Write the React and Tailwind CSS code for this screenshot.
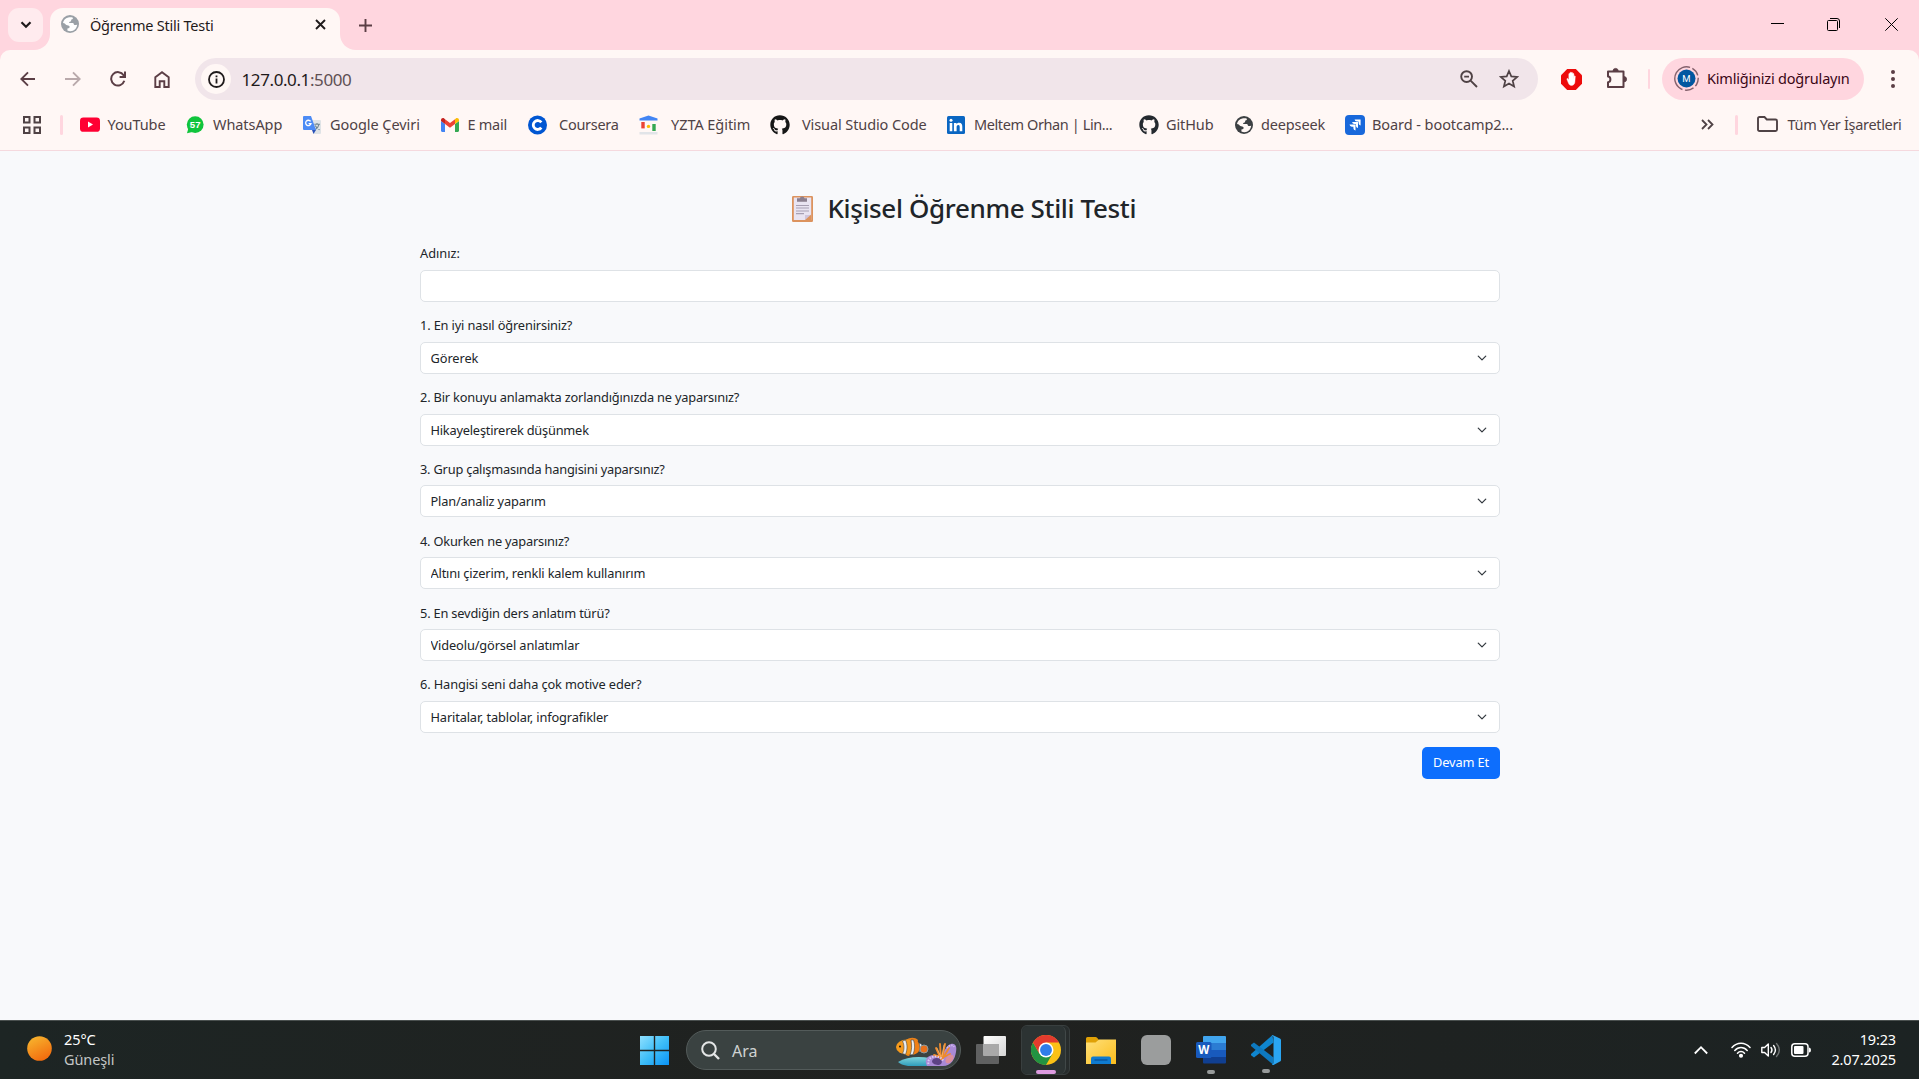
import React from 'react';
import { FaGithub } from 'react-icons/fa';

function Globe({ className, land }) {
  return (
    <svg className={className} viewBox="0 0 18 18">
      <circle cx="9" cy="9" r="9" fill="currentColor" />
      <path d="M7.2 2.4 C8.6 2.2 10.6 2 11.6 2.5 C12.4 3.6 11.5 4.4 10.4 4.6 C9.8 5.2 10.6 6 9.6 6.4 C8.4 6.6 8 7.2 8.2 8 L12 8 C12.8 8.2 12.6 9.6 13.4 10 C14.6 10.2 15.6 9.9 16.2 9.4 C16 13 13.2 16 9.4 16.2 C8.2 16.2 7.2 15.9 6.4 15.6 L6.4 13.6 C8 13.2 8.8 12.6 8.6 11.4 C8 10.2 6.4 10.4 5.4 10 C4.4 9.4 4 8.2 2 8 C2.2 5.4 4.4 3 7.2 2.4 Z" fill={land} />
    </svg>
  );
}

function YouTubeIcon() {
  return (
    <svg className="h-[15px] w-5" viewBox="0 0 20 15">
      <rect width="20" height="14.4" y=".4" rx="3.4" fill="#ff0033" />
      <path d="M8 4.6v6l5-3z" fill="#fff" />
    </svg>
  );
}

function WhatsAppIcon() {
  return (
    <svg className="h-[18px] w-[18px]" viewBox="0 0 18 18">
      <circle cx="9.2" cy="8.6" r="8.4" fill="#10c43c" />
      <path d="M1 17.2 2.4 12l4 4z" fill="#10c43c" />
      <text x="9.2" y="12.2" textAnchor="middle" fontSize="9.6" fontWeight="700" fill="#fff" fontFamily="Liberation Sans, sans-serif">57</text>
    </svg>
  );
}

function TranslateIcon() {
  return (
    <svg className="h-[18px] w-[18px]" viewBox="0 0 18 18">
      <path d="M7 4h10a1 1 0 0 1 1 1v12a1 1 0 0 1-1 1h-6z" fill="#dfe3e6" />
      <path d="M11.3 8.2h5.6M14 7v1.4M16 8.4c-.6 2.6-2 4.4-4 5.4M12.2 9.6c1 2 2.4 3.4 4.4 4.2" fill="none" stroke="#6f8792" strokeWidth="1.1" />
      <path d="M1 0h7l5 14H1a1 1 0 0 1-1-1V1a1 1 0 0 1 1-1z" fill="#4c8bf5" />
      <path d="m9 14 4 0-2.5 4z" fill="#2a52b8" />
      <path d="M7.6 5.4A2.7 2.7 0 1 0 8 7.6H5.6" fill="none" stroke="#fff" strokeWidth="1.3" />
    </svg>
  );
}

function GmailIcon() {
  return (
    <svg className="h-[14px] w-[18px]" viewBox="0 0 18 14">
      <path d="M0 3v9.8C0 13.5.6 14 1.2 14H4V6z" fill="#4285f4" />
      <path d="M18 3v9.8c0 .7-.6 1.2-1.2 1.2H14V6z" fill="#34a853" />
      <path d="M14 1.3V6l4-3V2c0-1.8-2-2.5-3.2-1.5z" fill="#fbbc04" />
      <path d="M4 6V1.3l5 3.8 5-3.8V6L9 9.8z" fill="#ea4335" />
      <path d="M0 2v1l4 3V1.3L3.2.5C2-.5 0 .2 0 2z" fill="#c5221f" />
    </svg>
  );
}

function CourseraIcon() {
  return (
    <svg className="h-5 w-[19px]" viewBox="0 0 20 20">
      <circle cx="10" cy="10" r="10" fill="#0056d2" />
      <path d="M14 7.2A4.7 4.7 0 1 0 14 12.8" fill="none" stroke="#fff" strokeWidth="3" />
    </svg>
  );
}

function AcademyIcon() {
  return (
    <svg className="h-5 w-[19px]" viewBox="0 0 19 20">
      <path d="M9.5.5 18.5 3.6V5.4H.5V3.6z" fill="#4285f4" />
      <rect x="2.3" y="7" width="3.4" height="6.4" fill="#ea4335" />
      <circle cx="9.5" cy="11.4" r="1.7" fill="#fbbc04" />
      <rect x="13.3" y="9" width="3.4" height="7" fill="#34a853" />
      <rect x=".5" y="17" width="18" height="2.5" fill="#e1e4e8" />
    </svg>
  );
}

function LinkedInIcon() {
  return (
    <svg className="h-[18px] w-[18px]" viewBox="0 0 18 18">
      <rect width="18" height="18" rx="1.5" fill="#0a66c2" />
      <path d="M2.7 6.9h2.6v8.4H2.7zM6.9 6.9h2.5v1.2c.5-.8 1.4-1.4 2.7-1.4 2.6 0 3.2 1.7 3.2 4v4.6h-2.6v-4.2c0-1 0-2.2-1.4-2.2s-1.7 1.1-1.7 2.2v4.2H6.900z" fill="#fff" />
      <circle cx="4" cy="4.2" r="1.5" fill="#fff" />
    </svg>
  );
}

function JiraIcon() {
  return (
    <svg className="h-5 w-5" viewBox="0 0 20 20">
      <rect width="20" height="20" rx="4" fill="#1868db" />
      <path d="M9.6 4.4H15.6V10.4A2.4 2.4 0 0 1 13.6 8.2V6.5H11.9A2.4 2.4 0 0 1 9.6 4.4zM7.1 7H13V13A2.4 2.4 0 0 1 10.9 10.7V9.1H9.4A2.4 2.4 0 0 1 7.1 7zM4.5 9.6H10.5V15.6A2.4 2.4 0 0 1 8.4 13.3V11.7H6.8A2.4 2.4 0 0 1 4.5 9.600z" fill="#fff" />
    </svg>
  );
}

const bookmarks = [
  { text: 'YouTube', icon: <YouTubeIcon />, box: 'w-[106px]', slot: 'w-[27.500px]', track: 'tracking-[-0.09px]' },
  { text: 'WhatsApp', icon: <WhatsAppIcon />, box: 'w-[117px]', slot: 'w-[27px]', track: 'tracking-[-0.07px]' },
  { text: 'Google Çeviri', icon: <TranslateIcon />, box: 'w-[138px]', slot: 'w-[27px]', track: 'tracking-[-0.06px]' },
  { text: 'E mail', icon: <GmailIcon />, box: 'w-[87px]', slot: 'w-[26.500px]', track: 'tracking-[-0.26px]' },
  { text: 'Coursera', icon: <CourseraIcon />, box: 'w-[111px]', slot: 'w-[31px]', track: 'tracking-[-0.28px]' },
  { text: 'YZTA Eğitim', icon: <AcademyIcon />, box: 'w-[131px]', slot: 'w-[32px]', track: 'tracking-[-0.05px]' },
  { text: 'Visual Studio Code', icon: <FaGithub className="h-5 w-5 text-[#161616]" />, box: 'w-[177px]', slot: 'w-[32px]', track: 'tracking-[-0.1px]' },
  { text: 'Meltem Orhan | Lin...', icon: <LinkedInIcon />, box: 'w-[192px]', slot: 'w-[27px]', track: 'tracking-[-0.4px]' },
  { text: 'GitHub', icon: <FaGithub className="h-5 w-5 text-[#24292f]" />, box: 'w-[96px]', slot: 'w-[27px]', track: 'tracking-[-0.12px]' },
  { text: 'deepseek', icon: <Globe className="h-[18px] w-[18px] text-[#3c4043]" land="#fff7f5" />, box: 'w-[110px]', slot: 'w-[26px]', track: 'tracking-[-0.15px]' },
  { text: 'Board - bootcamp2...', icon: <JiraIcon />, box: 'w-[356px]', slot: 'w-[27px]', track: 'tracking-[-0.07px]' },
];

const questions = [
  { label: '1. En iyi nasıl öğrenirsiniz?', labelTrack: 'tracking-[-0.15px]', value: 'Görerek', track: 'tracking-[-0.09px]' },
  { label: '2. Bir konuyu anlamakta zorlandığınızda ne yaparsınız?', labelTrack: 'tracking-[-0.185px]', value: 'Hikayeleştirerek düşünmek', track: 'tracking-[-0.21px]' },
  { label: '3. Grup çalışmasında hangisini yaparsınız?', labelTrack: 'tracking-[-0.2px]', value: 'Plan/analiz yaparım', track: 'tracking-[-0.165px]' },
  { label: '4. Okurken ne yaparsınız?', labelTrack: 'tracking-[-0.2px]', value: 'Altını çizerim, renkli kalem kullanırım', track: 'tracking-[-0.16px]' },
  { label: '5. En sevdiğin ders anlatım türü?', labelTrack: 'tracking-[-0.18px]', value: 'Videolu/görsel anlatımlar', track: 'tracking-[-0.12px]' },
  { label: '6. Hangisi seni daha çok motive eder?', labelTrack: 'tracking-[-0.12px]', value: 'Haritalar, tablolar, infografikler', track: 'tracking-[-0.14px]' },
];

function TabStrip() {
  return (
    <div className="flex h-[50px] bg-[#ffd6df]">
      <div className="ml-2 mt-2 flex h-[34px] w-[35px] items-center justify-center rounded-[11px] bg-[#ffebee]">
        <svg className="h-3 w-3" viewBox="0 0 12 12" fill="none" stroke="#1f1a1b" strokeWidth="2.2">
          <path d="M1.5 3.200 6 7.700l4.500-4.500" />
        </svg>
      </div>
      <div className="relative ml-[7px] mt-2 flex h-[42px] w-[290px] items-center rounded-t-[13px] bg-[#fff7f5] pb-1.5">
        <svg className="absolute bottom-0 right-full h-4 w-4" viewBox="0 0 16 16"><path d="M16 0v16H0C9 16 16 9 16 0z" fill="#fff7f5" /></svg>
        <svg className="absolute bottom-0 left-full h-4 w-4" viewBox="0 0 16 16"><path d="M0 0v16h16C7 16 0 9 0 0z" fill="#fff7f5" /></svg>
        <Globe className="mb-1 ml-[11px] h-[18px] w-[18px] text-[#9aa0a6]" land="#fff" />
        <span className="ml-[11px] text-[14.5px] tracking-[-0.23px] text-[#1f1a1b]">Öğrenme Stili Testi</span>
        <svg className="mb-1 ml-auto mr-[14.500px] h-[11px] w-[11px]" viewBox="0 0 11 11" stroke="#1f1a1b" strokeWidth="1.9">
          <path d="M1 1l9 9M10 1l-9 9" />
        </svg>
      </div>
      <svg className="ml-[19px] mt-[18.500px] h-[13px] w-[13px]" viewBox="0 0 13 13" stroke="#5b3e45" strokeWidth="1.9">
        <path d="M6.5 0v13M0 6.500h13" />
      </svg>
      <div className="ml-auto mr-[21px] mt-[18px] flex h-[13px] gap-[43px]">
        <svg className="h-[13px] w-[13px]" viewBox="0 0 13 13" stroke="#000"><path d="M0 5.500h13" /></svg>
        <svg className="h-[13px] w-[13px]" viewBox="0 0 13 13" fill="none" stroke="#000">
          <rect x=".5" y="2.5" width="10" height="10" rx="1" />
          <path d="M3 .5h7a2.500 2.500 0 0 1 2.500 2.500v7" />
        </svg>
        <svg className="ml-0.5 h-[13px] w-[13px]" viewBox="0 0 13 13" stroke="#000" strokeWidth="1"><path d="M.3.3l12.400 12.400M12.700.3.3 12.700" /></svg>
      </div>
    </div>
  );
}

function Toolbar() {
  return (
    <div className="flex h-[58px] items-center pr-[24px]">
      <svg className="ml-[20px] h-4 w-4" viewBox="0 0 16 16" fill="none" stroke="#5b3e45" strokeWidth="1.9"><path d="M15 8H2M8 1.300 1.300 8 8 14.700" /></svg>
      <svg className="ml-[29px] h-4 w-4" viewBox="0 0 16 16" fill="none" stroke="#b9a9ab" strokeWidth="1.9"><path d="M0 8h14M8 1.300 14.700 8 8 14.700" /></svg>
      <svg className="ml-[28.500px] h-4 w-4" viewBox="0 0 16 16" fill="none" stroke="#5b3e45" strokeWidth="2"><path d="M14.300 9.800A6.700 6.700 0 1 1 13.600 4.300L15 5.800M15 .4v5.500H9.600" /></svg>
      <svg className="ml-[28.500px] h-[17px] w-4" viewBox="0 0 16 17" fill="none" stroke="#5b3e45" strokeWidth="1.9"><path d="M1.300 16V6.300L8 1.200l6.700 5.100V16H10.300V10.200H5.700V16z" /></svg>
      <div className="ml-[25px] flex h-[42px] w-[1343px] items-center rounded-full bg-[#f1e5ea]">
        <div className="ml-[6px] flex h-[30px] w-[30px] items-center justify-center rounded-full bg-[#fff7f5]">
          <svg className="h-[17px] w-[17px]" viewBox="0 0 17 17" fill="none" stroke="#1f1a1b" strokeWidth="1.8">
            <circle cx="8.5" cy="8.5" r="7.5" />
            <path d="M8.5 7.600v4.800M8.500 4.500v1.700" />
          </svg>
        </div>
        <span className="ml-[10.500px] pt-px text-[17px] tracking-[-0.4px] text-[#1f1a1b]">127.0.0.1<span className="text-[#5f5054]">:5000</span></span>
        <svg className="ml-auto h-[18px] w-[18px]" viewBox="0 0 18 18" fill="none" stroke="#4f4245" strokeWidth="1.9">
          <circle cx="6.6" cy="6.6" r="5.4" />
          <path d="M10.600 10.600l6.400 6.400M4.200 6.600h4.800" />
        </svg>
        <svg className="ml-[21px] mr-[19.500px] h-[20px] w-[20px]" viewBox="0 0 20 20" fill="none" stroke="#4f4245" strokeWidth="1.7">
          <path d="M10 2l2.300 5.400 5.900.5-4.500 3.900 1.400 5.700L10 14.400l-5.100 3.100 1.400-5.700L1.800 7.900l5.900-.5z" />
        </svg>
      </div>
      <svg className="ml-[23px] h-[21px] w-[21px]" viewBox="0 0 21 21">
        <path d="M6.200 0h8.600L21 6.200v8.600L14.800 21H6.200L0 14.800V6.200z" fill="#ed0b0b" />
        <path d="M6 10.500c-.5-1 .5-1.500 1.200-.6l.6 1V5c0-.9 1.200-.9 1.200 0v3.800V3.900c0-.9 1.300-.9 1.300 0v4.900V3.900c0-.9 1.300-.9 1.300 0V9V5c0-.9 1.300-.9 1.300 0v5l.2-2.600c.1-.9 1.300-.8 1.200.1l-.4 5.500c-.2 2-1.500 3.500-3.400 3.500-1.700 0-2.500-.9-3.100-2.400z" fill="#fff" stroke="#fff" strokeWidth=".4" />
      </svg>
      <svg className="mb-0.5 ml-[24px] h-[22px] w-[22px]" viewBox="0 0 22 22">
        <path d="M2 4.500h15.500v15.500H2v-4.800c3.200 0 3.200-5.700 0-5.700z" fill="none" stroke="#5b3e45" strokeWidth="2" strokeLinejoin="round" />
        <path d="M7 4a2.600 2.600 0 0 1 5.200 0zM18 9.600a2.600 2.600 0 0 1 0 5.200z" fill="#5b3e45" stroke="#5b3e45" strokeWidth=".8" />
      </svg>
      <div className="ml-5 h-5 w-0.5 rounded bg-[#ffd6df]" />
      <div className="ml-3 flex h-[42px] w-[202px] items-center rounded-full bg-[#ffd6df]">
        <svg className="mb-px ml-[12px] h-[25px] w-[25px]" viewBox="0 0 25 25">
          <circle cx="12.5" cy="12.5" r="11.700" fill="none" stroke="#85616c" strokeWidth="1.4" strokeDasharray="34 2.500 9 2.500 9 2.500 9 2.500" transform="rotate(120 12.500 12.500)" />
          <circle cx="12.5" cy="12.5" r="9" fill="#0157a0" />
          <text x="12.5" y="15.9" textAnchor="middle" fontSize="9.5" fill="#fff" fontFamily="Roboto, sans-serif">M</text>
        </svg>
        <span className="ml-[8px] whitespace-nowrap text-[14.5px] tracking-[-0.2px] text-[#3b0716]">Kimliğinizi doğrulayın</span>
      </div>
      <svg className="ml-auto h-[18px] w-1" viewBox="0 0 4 18" fill="#5b3e45"><circle cx="2" cy="2" r="2" /><circle cx="2" cy="9" r="2" /><circle cx="2" cy="16" r="2" /></svg>
    </div>
  );
}

function BookmarksBar() {
  return (
    <div className="flex h-[43px] items-center border-b border-[#f5d9de] pb-[9px] text-[14.5px] text-[#4f4245]">
      <svg className="ml-[23px] h-[18px] w-[18px]" viewBox="0 0 18 18" fill="none" stroke="#4f4245" strokeWidth="2">
        <path d="M1 1h5.500v5.500H1zM11.500 1H17v5.500h-5.500zM1 11.500h5.500V17H1zM11.500 11.500H17V17h-5.500z" />
      </svg>
      <div className="ml-[19px] mr-[17px] h-5 w-[3px] rounded bg-[#ffd6df]" />
      {bookmarks.map((b) => (
        <div key={b.text} className={`flex shrink-0 items-center ${b.box}`}>
          <span className={`shrink-0 ${b.slot}`}>{b.icon}</span>
          <span className={`whitespace-nowrap ${b.track}`}>{b.text}</span>
        </div>
      ))}
      <svg className="h-[11px] w-[13px]" viewBox="0 0 13 11" fill="none" stroke="#4f4245" strokeWidth="1.8"><path d="M1 1l4.500 4.500L1 10M7 1l4.500 4.500L7 10" /></svg>
      <div className="ml-[21px] h-5 w-[3px] rounded bg-[#ffd6df]" />
      <svg className="mb-px ml-[19px] h-4 w-[21px]" viewBox="0 0 21 16" fill="none" stroke="#4f4245" strokeWidth="1.9"><path d="M1 13.500v-11Q1 1 2.500 1h5l2.300 2.500h8.700Q20 3.500 20 5v8.500q0 1.500-1.500 1.500h-16Q1 15 1 13.500z" /></svg>
      <span className="ml-[9.500px] whitespace-nowrap tracking-[-0.32px]">Tüm Yer İşaretleri</span>
    </div>
  );
}

function Clipboard() {
  return (
    <svg className="h-[27px] w-[21px]" viewBox="0 0 21 27">
      <rect y="1" width="21" height="26" rx="1.2" fill="#dc935e" />
      <rect x="1.8" y="2.5" width="17.4" height="22.5" fill="#e9e4f2" />
      <path d="M13 25v-5h6.200z" fill="#cfc5dd" />
      <path d="M13 25l6.200-5.500V25z" fill="#dc935e" />
      <path d="M5 6.800V3.200h2.800a2.500 2.500 0 0 1 4.800 0H15v3.600z" fill="#8b7f8f" />
      <path d="M4 10.500h13M4 13h13M4 16h13M4 18.700h8" stroke="#a79fb3" strokeWidth="1.2" />
    </svg>
  );
}

function Survey() {
  return (
    <main className="h-[869px] bg-[#f8f9fb] pt-[41px]">
      <form className="mx-auto w-[1080px] text-[12.8px] text-[#212529]">
        <h2 className="mb-[19.300px] flex h-8 items-center justify-center text-[26px] font-medium tracking-[-0.36px]">
          <span className="mr-[14.500px] pl-[9px]"><Clipboard /></span>Kişisel Öğrenme Stili Testi
        </h2>
        <div className="h-[71.85px]">
          <label className="mb-[6.67px] block h-5 pl-[0.5px] leading-5 tracking-[-0.03px]">Adınız:</label>
          <input className="block h-[31.67px] w-full rounded-[5px] border border-[#dee2e6] bg-white px-2.5 outline-none" />
        </div>
        {questions.map((q) => (
          <div key={q.value} className="h-[71.85px]">
            <label className={`mb-[6.67px] block h-5 pl-[0.5px] leading-5 ${q.labelTrack}`}>{q.label}</label>
            <div className="relative">
              <select className={`block h-[32px] w-full appearance-none rounded-[5px] border border-[#dee2e6] bg-white px-[10px] pt-px outline-none ${q.track}`}>
                <option>{q.value}</option>
              </select>
              <svg className="pointer-events-none absolute right-[12.500px] top-[11px] h-[10px] w-[10px]" viewBox="0 0 16 16" fill="none" stroke="#343a40" strokeWidth="2" strokeLinecap="round" strokeLinejoin="round"><path d="m2 5 6 6 6-6" /></svg>
            </div>
          </div>
        ))}
        <div className="mt-[0.700px] flex justify-end">
          <button type="button" className="h-8 w-[78px] rounded-[5px] bg-[#0d6efd] pl-px tracking-[-0.12px] text-white">Devam Et</button>
        </div>
      </form>
    </main>
  );
}

function Reef() {
  return (
    <svg className="h-[31px] w-[61px]" viewBox="0 0 61 31">
      <defs>
        <linearGradient id="sea" x1="0" y1="0" x2="0" y2="1"><stop offset="0" stopColor="#7fd4dc" /><stop offset="1" stopColor="#2f9dbb" /></linearGradient>
      </defs>
      <path d="M2 25c8-5 20-6 32-4l8 8H12c-5-1-8-2-10-4z" fill="url(#sea)" />
      <path d="M10 3c4-3 9-3 12 0l-1 5zM8 15l8 0-3 4c-3 0-4-2-5-4z" fill="#e8801a" />
      <ellipse cx="11" cy="10" rx="11" ry="7.5" fill="#f59a1d" />
      <path d="M14 3c6-1 9 2 10 6s-2 8-8 9z" fill="#ef7f16" />
      <path d="M6.500 4c2 4 2 9 0 12.500l3 1c2-5 2-10 0-14.500zM15 3c1 5 1 10-1 15l3-.5c2-5 2-10 .5-14.500zM23 6c1 3 1 6 0 9l3-1c.5-3 .5-5-.5-7z" fill="#eceef0" stroke="#27313a" strokeWidth=".5" />
      <circle cx="4" cy="9.5" r="1" fill="#111" />
      <circle cx="28" cy="12" r="4" fill="#e9701b" stroke="#8b9aa0" strokeWidth="1" />
      <path d="M31 29c-3-6 0-11 7-11h8c2-4 5-10 9-11 5-1 6 3 5 8-1 7-5 14-13 14z" fill="#a98ad6" />
      <path d="M36 24c1-3 5-4 8-2 3 2 2 5-1 6-3 0-7-1-7-4z" fill="#5d4385" />
      <path d="M45 22l-5-11M45 22l-1-15M46 22l3-15M47 21l6-10M44 20l-6-2M48 20l6-3" stroke="#ee8a2c" strokeWidth="1.9" strokeLinecap="round" />
      <path d="M45 20l-4-9M46 19l2-11" stroke="#fbc07a" strokeWidth=".7" strokeLinecap="round" />
      <path d="M32.500 27c-1-4 2-7.500 7-7.500 3 0 6 1 7.500 4" fill="none" stroke="#dccbf3" strokeWidth="2" strokeDasharray="1.500 1.300" />
      <path d="M51 11c2-3 6-3.500 7-1" fill="none" stroke="#d0baf0" strokeWidth="1.8" strokeDasharray="1.500 1" />
      <ellipse cx="53.500" cy="22" rx="5" ry="3.200" transform="rotate(-50 53.500 22)" fill="#dd8f9c" />
    </svg>
  );
}

function ChromeIcon() {
  return (
    <svg className="h-[30px] w-[30px]" viewBox="0 0 48 48">
      <circle cx="24" cy="24" r="24" fill="#fbc116" />
      <path d="M3.200 12A24 24 0 0 0 24 48L34.400 30 24 24 13.600 30z" fill="#229342" />
      <path d="M24 12h20.800A24 24 0 0 0 3.200 12L13.600 30z" fill="#e33b2e" />
      <circle cx="24" cy="24" r="12" fill="#fff" />
      <circle cx="24" cy="24" r="9.5" fill="#2f7de9" />
    </svg>
  );
}

function Taskbar() {
  return (
    <footer className="flex h-[59px] items-center justify-between border-t border-[#4a504f] bg-linear-to-r from-[#1d2524] via-[#20211f] to-[#1c2323] pr-[23px] font-['Noto_Sans',sans-serif]">
      <div className="flex w-[639px] items-center pl-[27px]">
        <svg className="mb-[3px] h-[25px] w-[25px]" viewBox="0 0 25 25">
          <defs><linearGradient id="sun" x1=".2" y1="0" x2=".7" y2="1"><stop offset="0" stopColor="#f7b52e" /><stop offset="1" stopColor="#f2690d" /></linearGradient></defs>
          <circle cx="12.5" cy="12.5" r="12.3" fill="url(#sun)" />
        </svg>
        <div className="mb-0.5 ml-3 text-[14.5px] leading-5 text-white">
          <p className="tracking-[-0.1px]">25°C</p>
          <p className="tracking-[-0.1px] text-[#c3c6c6]">Güneşli</p>
        </div>
      </div>
      <div className="flex flex-1 items-center">
        <svg className="ml-[1px] h-[29px] w-[29px]" viewBox="0 0 29 29">
          <defs><linearGradient id="win" x1="0" y1="0" x2="1" y2="1"><stop offset="0" stopColor="#8fe0ff" /><stop offset=".5" stopColor="#3fbef8" /><stop offset="1" stopColor="#0a93f5" /></linearGradient></defs>
          <path d="M0 0h13.800v13.800H0zM15.200 0H29v13.800H15.200zM0 15.200h13.800V29H0zM15.200 15.200H29V29H15.200z" fill="url(#win)" />
        </svg>
        <div className="ml-[17px] flex h-10 w-[275px] items-center rounded-full border border-[#535b5a] bg-[#3a4241] pl-[14px] pr-[3px]">
          <svg className="h-[19px] w-[19px]" viewBox="0 0 19 19" fill="none" stroke="#e4e6e6" strokeWidth="2"><circle cx="8" cy="8" r="6.800" /><path d="M13 13l5 5" strokeWidth="2.4" /></svg>
          <span className="ml-[12px] mr-auto pt-px text-[16px] text-[#cfd2d2]">Ara</span>
          <div className="pt-[5px]"><Reef /></div>
        </div>
        <svg className="ml-[15px] h-[28px] w-[30px]" viewBox="0 0 30 28">
          <defs><linearGradient id="tv" x1="0" y1="0" x2="1" y2="1"><stop offset="0" stopColor="#fff" /><stop offset="1" stopColor="#d5d5d5" /></linearGradient></defs>
          <rect y="8" width="23" height="20" rx="1" fill="#606161" />
          <rect x="7.5" width="22.5" height="20" rx="1" fill="url(#tv)" />
          <rect x="7.5" y="8" width="15.5" height="12" fill="#a9a9a9" />
        </svg>
        <div className="ml-[15px] flex h-[50px] w-[49px] rounded-[6px] border border-[#393f3f] bg-[#272c2c]">
          <div className="flex h-[48px] w-[44px] flex-col items-center rounded-[6px] border-r border-[#414848] bg-[#2c3333] pl-[5px] pt-[9px]">
            <ChromeIcon />
            <div className="mt-[5px] h-1 w-5 shrink-0 rounded-full bg-[#dd9be0]" />
          </div>
        </div>
        <svg className="ml-[15.500px] h-[27px] w-[30px]" viewBox="0 0 30 27">
          <defs><linearGradient id="fold" x1="0" y1="0" x2="1" y2="1"><stop offset="0" stopColor="#ffe07a" /><stop offset="1" stopColor="#fbbd1c" /></linearGradient></defs>
          <path d="M0 1.500Q0 0 1.500 0h8q1 0 1.600.8L13 3l-2.500 3H0z" fill="#e0a106" />
          <path d="M0 5.500h9.500L13 2.500h17V27H0z" fill="url(#fold)" />
          <path d="M5 27v-5.500Q5 19.500 7 19.500h16q2 0 2 2V27z" fill="#0f7bd0" />
          <path d="M8.500 23h13" stroke="#0a4f94" strokeWidth="1.2" />
        </svg>
        <div className="ml-[25px] h-[30px] w-[30px] rounded-[6px] bg-[#9b9d9d]" />
        <div className="relative ml-[25px] h-[29px] w-[30px]">
          <svg className="h-[29px] w-[30px]" viewBox="0 0 30 29">
            <path d="M7 1q0-1 1-1h21q1 0 1 1v6.500H7z" fill="#41a5ee" />
            <path d="M7 7h23v7H7z" fill="#2b7cd3" />
            <path d="M7 14h23v7H7z" fill="#185abd" />
            <path d="M7 21h23v5.500q0 1-1 1H8q-1 0-1-1z" fill="#103f91" />
            <rect y="6" width="15.5" height="16" rx="1.5" fill="#185abd" />
            <text x="7.7" y="18" textAnchor="middle" fontSize="11.5" fontWeight="700" fill="#fff" fontFamily="Open Sans, sans-serif">W</text>
          </svg>
          <div className="absolute left-[11px] top-[34px] h-1 w-2 rounded-full bg-[#979a9a]" />
        </div>
        <div className="relative ml-[25px] h-[30px] w-[30px]">
          <svg className="h-[30px] w-[30px]" viewBox="0 0 30 30">
            <path d="M22.500 7.500 3 22.500 0 20.300Q-.4 19.600 0 19L21.500 0z" fill="#0f86cf" />
            <path d="M0 9.700 3 7.500l19.500 15V30L0 11Q-.4 10.300 0 9.700z" fill="#0e79bf" />
            <path d="M21.500 0 29 3.500q1 .5 1 1.500v20q0 1-1 1.500L22.500 30q-1 .2-1.500-.5l1.500-1.200V1.700L21 .5z" fill="#2aa5f2" />
          </svg>
          <div className="absolute left-[11px] top-[34px] h-1 w-2 rounded-full bg-[#979a9a]" />
        </div>
      </div>
      <div className="flex items-center">
        <svg className="h-[10px] w-[14px]" viewBox="0 0 14 10" fill="none" stroke="#fff" strokeWidth="1.8"><path d="M.8 8.500 7 2.200l6.200 6.300" /></svg>
        <svg className="ml-[23px] h-[16px] w-[20px]" viewBox="0 0 20 16" fill="none" stroke="#fff" strokeWidth="1.5" strokeLinecap="round">
          <path d="M1 5.500C6-.2 14-.2 19 5.500M3.800 8.500c3.500-4 8.900-4 12.400 0M6.500 11.300c2-2.300 5-2.300 7 0" />
          <circle cx="10" cy="13.8" r="1.3" fill="#fff" />
        </svg>
        <svg className="ml-[10px] h-[16px] w-[20px]" viewBox="0 0 20 16" fill="none" stroke="#fff" strokeWidth="1.4" strokeLinecap="round" strokeLinejoin="round">
          <path d="M.8 5.500v5h2.800L7.300 14V2L3.600 5.500zM10 5.500c1.200 1.500 1.200 3.500 0 5M12.600 3.500c2.200 2.700 2.200 6.300 0 9" />
          <path d="M15.500 1.500c3.500 4 3.500 9 0 13" stroke="#6d7171" />
        </svg>
        <svg className="ml-[10px] h-[14px] w-[20px]" viewBox="0 0 20 14">
          <rect x=".8" y=".8" width="16.2" height="12.4" rx="3" fill="none" stroke="#fff" strokeWidth="1.5" />
          <rect x="3" y="3" width="9.5" height="8" rx="1" fill="#fff" />
          <path d="M18 4.500q2 0 2 2.500t-2 2.500z" fill="#fff" />
        </svg>
        <div className="mb-0.5 ml-[20px] text-right text-[14.5px] leading-5 tracking-[-0.14px] text-white">
          <p>19:23</p>
          <p>2.07.2025</p>
        </div>
      </div>
    </footer>
  );
}

export default function App() {
  return (
    <div className="h-[1079px] w-[1919px] overflow-hidden bg-[#ffd6df] font-['Noto_Sans',sans-serif]">
      <TabStrip />
      <header className="rounded-t-[10px] bg-[#fff7f5]">
        <Toolbar />
        <BookmarksBar />
      </header>
      <Survey />
      <Taskbar />
    </div>
  );
}
